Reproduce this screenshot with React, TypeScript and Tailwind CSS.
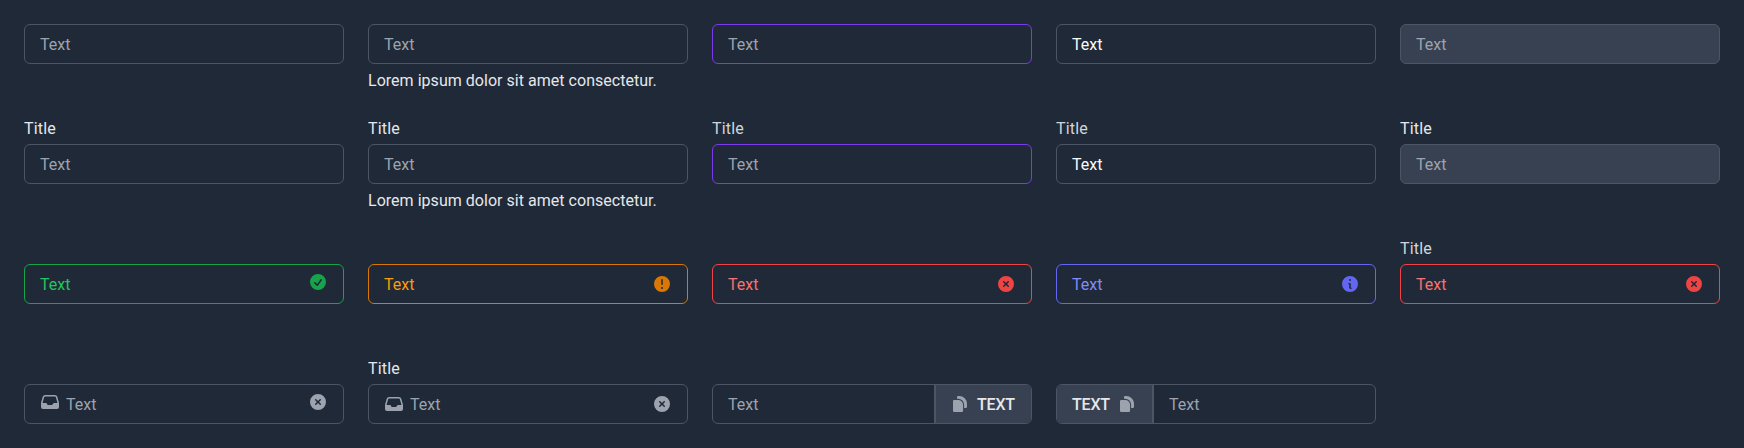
import type { ReactNode } from "react";
import {
  HiMiniCheckCircle,
  HiMiniExclamationCircle,
  HiMiniXCircle,
  HiMiniInformationCircle,
  HiMiniInbox,
} from "react-icons/hi2";

function Documents() {
  return (
    <svg viewBox="0 0 14 16" className="h-4 w-3.5 shrink-0 text-[#9ca3af]" fill="currentColor">
      <path d="M5.2 0A1.2 1.2 0 0 0 4 1.200V2.800H5.200A5.900 5.900 0 0 1 11.100 8.700V12H12.800A1.200 1.200 0 0 0 14 10.800V7.800A7.800 7.800 0 0 0 6.200 0Z" />
      <path d="M1.300 4A1.300 1.300 0 0 0 0 5.300V14.700A1.300 1.300 0 0 0 1.300 16H8.800A1.300 1.300 0 0 0 10.100 14.700V8.900A4.900 4.900 0 0 0 5.200 4Z" />
    </svg>
  );
}

type FieldProps = {
  title?: string;
  titleColor?: string;
  help?: string;
  border?: string;
  fill?: string;
  color?: string;
  lead?: ReactNode;
  trail?: ReactNode;
  before?: ReactNode;
  after?: ReactNode;
};

function Field({
  title,
  titleColor = "text-[#e5e7eb]",
  help,
  border = "border-[#4b5563]",
  fill = "",
  color = "text-[#9ca3af]",
  lead,
  trail,
  before,
  after,
}: FieldProps) {
  return (
    <div className="flex flex-col">
      <div className={`h-6 leading-[17px] tracking-[0.2px] ${titleColor}`}>{title}</div>
      <div className={`flex h-10 overflow-hidden rounded-md border ${border} ${fill}`}>
        {before}
        <div className="flex flex-1 items-center px-[15px]">
          {lead}
          <span className={`flex-1 pt-px ${color}`}>Text</span>
          {trail}
        </div>
        {after}
      </div>
      {help && <div className="pt-[5px] leading-6 tracking-[0.03px] text-[#e5e7eb]">{help}</div>}
    </div>
  );
}

const addon = "flex items-center bg-[#374151] font-medium tracking-[-0.2px] text-[#e5e7eb] border-[#4b5563]";
const clear = "h-5 w-5 shrink-0 text-[#9ca3af]";

export default function App() {
  return (
    <main className="h-[448px] w-[1744px] overflow-hidden bg-[#1f2937] px-6 font-['Roboto',sans-serif] text-base">
      <div className="grid auto-rows-[96px] grid-cols-[repeat(5,320px)] gap-6">
        <Field />
        <Field help="Lorem ipsum dolor sit amet consectetur." />
        <Field border="border-[#7c3aed]" />
        <Field color="text-[#f9fafb]" />
        <Field fill="bg-[#374151]" />

        <Field title="Title" />
        <Field title="Title" help="Lorem ipsum dolor sit amet consectetur." />
        <Field title="Title" titleColor="text-[#d1d5db]" border="border-[#7c3aed]" />
        <Field title="Title" titleColor="text-[#d1d5db]" color="text-[#f9fafb]" />
        <Field title="Title" fill="bg-[#374151]" />

        <Field
          border="border-[#16a34a]"
          color="text-[#22c55e]"
          trail={<HiMiniCheckCircle className="mb-1 h-5 w-5 text-[#16a34a]" />}
        />
        <Field
          border="border-[#d97706]"
          color="text-[#f59e0b]"
          trail={<HiMiniExclamationCircle className="h-5 w-5 text-[#d97706]" />}
        />
        <Field
          border="border-[#ef4444]"
          color="text-[#f87171]"
          trail={<HiMiniXCircle className="h-5 w-5 text-[#ef4444]" />}
        />
        <Field
          border="border-[#6366f1]"
          color="text-[#818cf8]"
          trail={<HiMiniInformationCircle className="h-5 w-5 text-[#6366f1]" />}
        />
        <Field
          title="Title"
          titleColor="text-[#d1d5db]"
          border="border-[#ef4444]"
          color="text-[#f87171]"
          trail={<HiMiniXCircle className="h-5 w-5 text-[#ef4444]" />}
        />

        <Field
          lead={<HiMiniInbox className="mr-1.5 mb-1 h-5 w-5 text-[#9ca3af]" />}
          trail={<HiMiniXCircle className={`${clear} mb-1`} />}
        />
        <Field
          title="Title"
          lead={<HiMiniInbox className="mr-1.5 h-5 w-5 text-[#9ca3af]" />}
          trail={<HiMiniXCircle className={clear} />}
        />
        <Field
          after={
            <div className={`${addon} w-[97px] gap-2.5 border-l-2 pl-[17px]`}>
              <Documents />
              <span className="pt-px">TEXT</span>
            </div>
          }
        />
        <Field
          before={
            <div className={`${addon} w-[97px] justify-between border-r-2 pr-[18px] pl-[15px]`}>
              <span className="pt-px">TEXT</span>
              <Documents />
            </div>
          }
        />
      </div>
    </main>
  );
}
